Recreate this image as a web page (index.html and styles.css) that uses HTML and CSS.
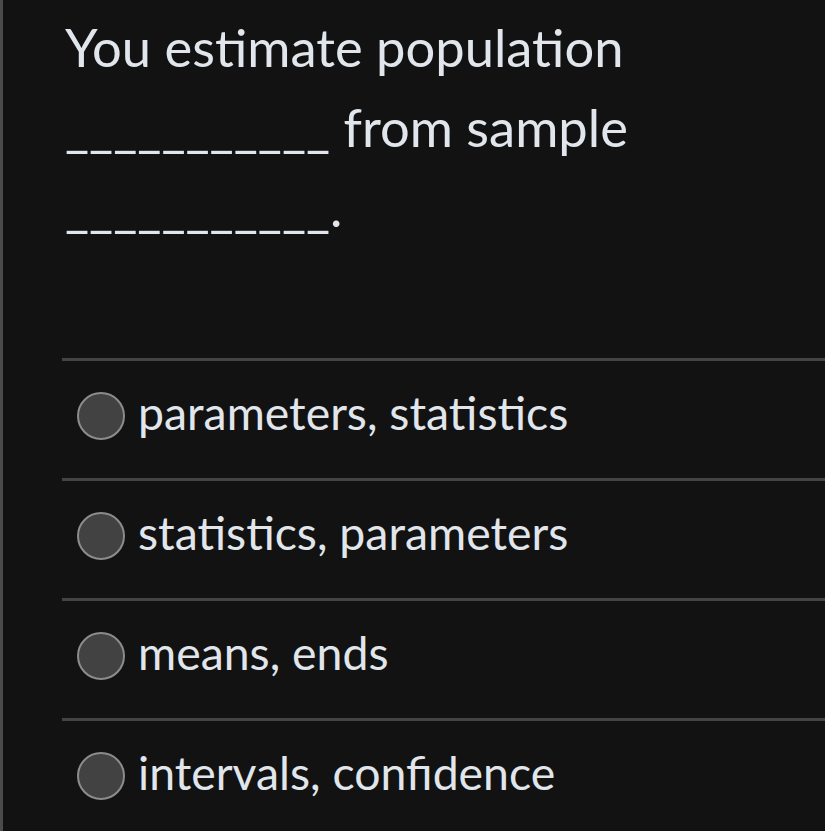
FILE: index.html
```html
<!DOCTYPE html>
<html>
<head>
<meta charset="utf-8">
<link rel="stylesheet" href="styles.css">
</head>
<body>
<div class="page">
  <div class="question">You estimate population ___________ from sample ___________.</div>
  <ul class="options">
    <li class="option"><span class="radio"></span><span class="label">parameters, statistics</span></li>
    <li class="option"><span class="radio"></span><span class="label">statistics, parameters</span></li>
    <li class="option"><span class="radio"></span><span class="label">means, ends</span></li>
    <li class="option"><span class="radio"></span><span class="label">intervals, confidence</span></li>
  </ul>
</div>
</body>
</html>
```

FILE: styles.css
```css
html, body {
  margin: 0;
  padding: 0;
  background: #121212;
}
.page {
  min-height: 831px;
  border-left: 3px solid #4b4b4b;
  background: #121212;
  font-family: Lato, "Noto Sans", sans-serif;
  color: #e0e6ec;
  padding-left: 59px;
}
.question {
  font-size: 52.5px;
  line-height: 80px;
  padding-top: 7px;
  padding-left: 3px;
  padding-right: 20px;
  margin-bottom: 111px;
}
.options {
  list-style: none;
  margin: 0;
  padding: 0;
}
.option {
  display: flex;
  align-items: center;
  height: 117px;
  border-top: 3px solid #444444;
  padding-left: 15px;
  gap: 13px;
}
.radio {
  width: 44px;
  height: 44px;
  border-radius: 50%;
  background: #424242;
  border: 2px solid #8c8c8c;
  flex: none;
  margin-top: -8px;
}
.label {
  font-size: 46.4px;
  margin-top: -15px;
}
```
